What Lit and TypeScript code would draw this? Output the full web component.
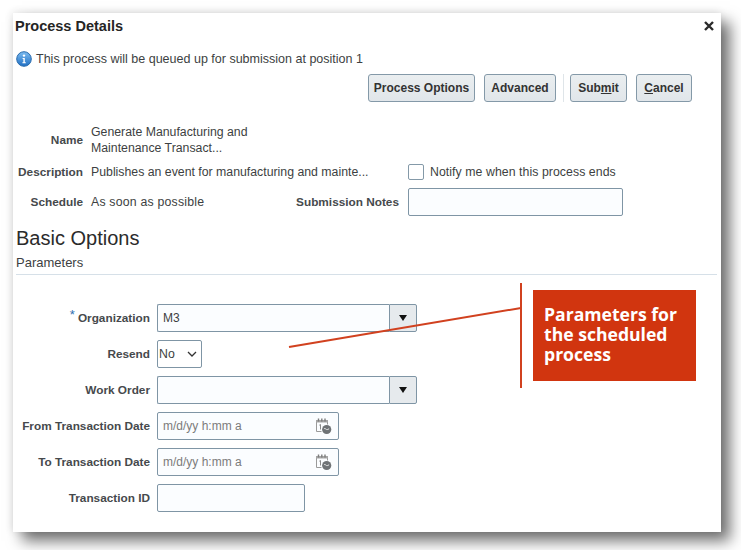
import { LitElement, html, css, svg } from "lit";
import { customElement } from "lit/decorators.js";

const calendarIcon = svg`<svg class="cal" width="18" height="18" viewBox="0 0 18 18" aria-hidden="true">
  <path d="M1.5 4.5h11M1.5 3.5v11h5M12.5 3.5v4" fill="none" stroke="#9a9a9a" stroke-width="1"/>
  <path d="M1 3h12v2.5H1z" fill="#a6a6a6"/>
  <path d="M3.5 1.5v3M6.8 1.5v3M10 1.5v3" stroke="#7d7d7d" stroke-width="1.4"/>
  <path d="M4.3 8.2l1.2-.7v5" fill="none" stroke="#8a8a8a" stroke-width="1"/>
  <circle cx="11.7" cy="12.5" r="4.6" fill="#6f7376"/>
  <path d="M9.2 11.6c1.2-.8 1.9 1.5 3.1 1l1.8-.8" fill="none" stroke="#e8e8e8" stroke-width="1"/>
</svg>`;

@customElement("app-root")
export class AppRoot extends LitElement {
  static styles = css`
    :host {
      display: block;
      width: 741px;
      height: 550px;
      overflow: hidden;
      background: #fff;
      font-family: "Liberation Sans", Arial, sans-serif;
      font-size: 12.3px;
      color: #3d3f42;
    }
    .page { padding: 13px 0 0 13px; }
    .dialog {
      position: relative;
      box-sizing: border-box;
      width: 708px;
      height: 519px;
      background: #fff;
      box-shadow: 9px 9px 14px rgba(0, 0, 0, 0.56), -1px -1px 8px rgba(0, 0, 0, 0.1);
    }
    .head {
      display: flex;
      justify-content: space-between;
      align-items: center;
      height: 26px;
      padding: 0 6px 0 2px;
    }
    .title { font-size: 14.5px; font-weight: 700; color: #252525; }
    .info {
      display: flex;
      align-items: center;
      gap: 4px;
      height: 16px;
      margin: 12px 0 0 3px;
      font-size: 12.53px;
    }
    .actions {
      display: flex;
      justify-content: flex-end;
      align-items: stretch;
      height: 28px;
      margin-top: 7px;
      padding-right: 29px;
    }
    .btn {
      box-sizing: border-box;
      height: 28px;
      padding: 0;
      border: 1px solid #8499a8;
      border-radius: 3px;
      background: linear-gradient(#eaeef0, #e1e6ea);
      font: 700 12px "Liberation Sans", Arial, sans-serif;
      color: #333;
      text-align: center;
    }
    .w-options { width: 107px; margin-right: 9px; }
    .w-advanced { width: 72px; }
    .w-submit { width: 57px; margin-right: 9px; }
    .w-cancel { width: 56px; }
    .sep { width: 1px; margin: 0 6px 0 7px; background: #dfe5e9; }
    .summary {
      display: grid;
      grid-template-columns: 70px 190px 111px 215px;
      column-gap: 8px;
      row-gap: 8px;
      margin-top: 22px;
      align-items: center;
    }
    .lbl { text-align: right; font-weight: 700; font-size: 11.8px; color: #46494c; white-space: nowrap; }
    .name { line-height: 16px; }
    .span2 { grid-column: span 2; }
    .schedule { letter-spacing: 0.2px; white-space: nowrap; }
    .notify { display: flex; align-items: center; gap: 6px; white-space: nowrap; letter-spacing: 0.06px; }
    .check {
      box-sizing: border-box;
      width: 16px;
      height: 16px;
      border: 1px solid #8499a8;
      border-radius: 2px;
      background: #fff;
    }
    .notes-lbl { padding-right: 1px; }
    input {
      box-sizing: border-box;
      display: block;
      height: 28px;
      margin: 0;
      padding: 0 5px;
      border: 1px solid #7f95a5;
      border-radius: 2px;
      background: #fbfdff;
      font: 12px "Liberation Sans", Arial, sans-serif;
      color: #3d3f42;
      outline: none;
    }
    input::placeholder { color: #7b7b7b; opacity: 1; }
    .notes { width: 215px; }
    h2 {
      margin: 10px 0 0 3px;
      height: 24px;
      font-size: 20px;
      font-weight: 400;
      line-height: 24px;
      color: #2b2b2b;
    }
    .sub { margin: 6px 0 0 3px; height: 14px; font-size: 13px; line-height: 14px; color: #3d3f42; }
    .rule { height: 1px; margin: 4px 4px 0 3px; background: #d6e0e8; }
    .form {
      display: grid;
      grid-template-columns: 137px auto;
      justify-content: start;
      column-gap: 7px;
      row-gap: 8px;
      align-items: center;
      margin-top: 29px;
    }
    .star { color: #2f6fb0; font-weight: 400; font-size: 13px; line-height: 0; position: relative; top: -3px; margin-right: 3px; }
    .combo { display: flex; width: 260px; height: 28px; }
    .combo input { flex: 1; min-width: 0; border-radius: 2px 0 0 2px; border-right: 0; }
    .drop {
      box-sizing: border-box;
      display: flex;
      align-items: center;
      justify-content: center;
      width: 28px;
      height: 28px;
      border: 1px solid #7f95a5;
      border-radius: 0 2px 2px 0;
      background: #e6eaed;
    }
    .tri { width: 0; height: 0; border-left: 4.5px solid transparent; border-right: 4.5px solid transparent; border-top: 6px solid #111; }
    .pick { position: relative; display: block; width: 45px; height: 28px; }
    select {
      appearance: none;
      box-sizing: border-box;
      display: block;
      width: 45px;
      height: 28px;
      margin: 0;
      padding: 0 0 0 1px;
      border: 1px solid #7f95a5;
      border-radius: 2px;
      background: #fff;
      font: 12.3px "Liberation Sans", Arial, sans-serif;
      color: #3d3f42;
      outline: none;
    }
    .chev { position: absolute; right: 5px; top: 11px; pointer-events: none; }
    .date { position: relative; width: 182px; height: 28px; }
    .date input { width: 100%; }
    .cal { position: absolute; right: 6px; top: 5px; }
    .tid { width: 148px; }
    .leader { position: absolute; left: 270px; top: 265px; pointer-events: none; }
    .callout {
      position: absolute;
      left: 520px;
      top: 277px;
      box-sizing: border-box;
      width: 163px;
      height: 91px;
      padding: 14px 10px 0 11px;
      background: #d1350f;
      color: #fff;
      font: 700 17.6px/20px "Open Sans", sans-serif;
    }
  `;

  render() {
    return html`
      <div class="page">
        <div class="dialog">
          <div class="head">
            <span class="title">Process Details</span>
            <svg width="12" height="12" viewBox="0 0 12 12" aria-label="Close"><path d="M2 2l8 8M10 2l-8 8" stroke="#2a2a2a" stroke-width="2.4"/></svg>
          </div>
          <div class="info">
            <svg width="16" height="16" viewBox="0 0 16 16" aria-hidden="true">
              <defs><linearGradient id="ig" x1="0" y1="0" x2="0" y2="1"><stop offset="0" stop-color="#7dbcf0"/><stop offset="1" stop-color="#1f6fc4"/></linearGradient></defs>
              <circle cx="8" cy="8" r="7.3" fill="url(#ig)" stroke="#2a6cad" stroke-width="1"/>
              <circle cx="8" cy="4.6" r="1.2" fill="#fff"/>
              <path d="M6.6 7h2.2v4.3h1v.9H6.4v-.9h1V7.9h-.8z" fill="#fff"/>
            </svg>
            <span>This process will be queued up for submission at position 1</span>
          </div>
          <div class="actions">
            <button class="btn w-options">Process Options</button>
            <button class="btn w-advanced">Advanced</button>
            <span class="sep"></span>
            <button class="btn w-submit">Sub<u>m</u>it</button>
            <button class="btn w-cancel"><u>C</u>ancel</button>
          </div>
          <div class="summary">
            <div class="lbl">Name</div>
            <div class="name span2">Generate Manufacturing and<br />Maintenance Transact...</div>
            <div></div>
            <div class="lbl">Description</div>
            <div class="span2">Publishes an event for manufacturing and mainte...</div>
            <div class="notify"><span class="check"></span><span>Notify me when this process ends</span></div>
            <div class="lbl">Schedule</div>
            <div class="schedule">As soon as possible</div>
            <div class="lbl notes-lbl">Submission Notes</div>
            <input class="notes" />
          </div>
          <h2>Basic Options</h2>
          <div class="sub">Parameters</div>
          <div class="rule"></div>
          <div class="form">
            <div class="lbl"><span class="star">*</span>Organization</div>
            <div class="combo"><input value="M3" /><span class="drop"><span class="tri"></span></span></div>
            <div class="lbl">Resend</div>
            <span class="pick">
              <select><option>No</option></select>
              <svg class="chev" width="10" height="6" viewBox="0 0 10 6" aria-hidden="true"><path d="M1 1l4 4 4-4" fill="none" stroke="#333" stroke-width="1.3"/></svg>
            </span>
            <div class="lbl">Work Order</div>
            <div class="combo"><input /><span class="drop"><span class="tri"></span></span></div>
            <div class="lbl">From Transaction Date</div>
            <div class="date"><input placeholder="m/d/yy h:mm a" />${calendarIcon}</div>
            <div class="lbl">To Transaction Date</div>
            <div class="date"><input placeholder="m/d/yy h:mm a" />${calendarIcon}</div>
            <div class="lbl">Transaction ID</div>
            <input class="tid" />
          </div>
          <svg class="leader" width="245" height="112" viewBox="0 0 245 112" aria-hidden="true">
            <path d="M6 69L238 30" stroke="#d1411f" stroke-width="2" fill="none"/>
            <path d="M238 5v105" stroke="#d1411f" stroke-width="2" fill="none"/>
          </svg>
          <div class="callout">Parameters for the scheduled process</div>
        </div>
      </div>
    `;
  }
}
